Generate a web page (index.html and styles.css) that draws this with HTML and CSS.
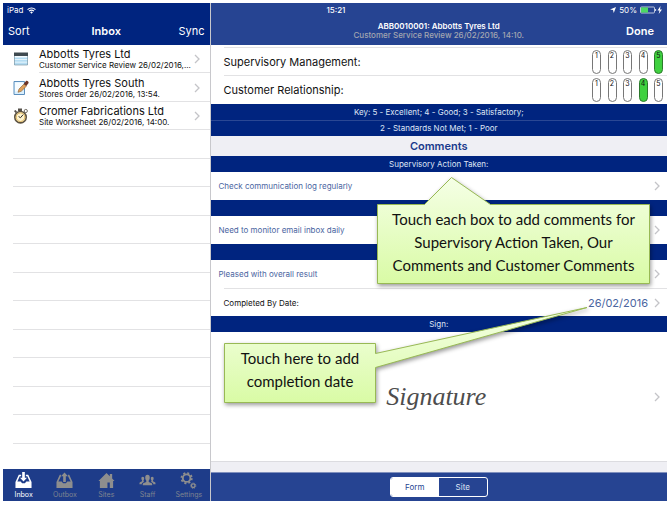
FILE: index.html
```html
<!DOCTYPE html>
<html lang="en">
<head>
  <meta charset="UTF-8" />
  <meta name="viewport" content="width=device-width, initial-scale=1.0"/>
  <title>Inbox - Customer Service Review</title>
  <link rel="stylesheet" href="styles.css">
</head>
<body>
  <div class="tablet">

    <aside class="sidebar">
      <header class="side-header">
        <div class="status">
          <span>iPad</span>
          <svg class="wifi" viewBox="0 0 16 12"><path d="M1 4.5a10 10 0 0 1 14 0M3.6 7.2a6.2 6.2 0 0 1 8.8 0" fill="none" stroke="#fff" stroke-width="2"/><path d="M5.6 9a3.5 3.5 0 0 1 4.8 0L8 11.6z" fill="#fff"/></svg>
        </div>
        <div class="nav">
          <button class="nav-btn">Sort</button>
          <h1>Inbox</h1>
          <button class="nav-btn">Sync</button>
        </div>
      </header>

      <ul class="list">
        <li class="item">
          <svg class="item-icon" viewBox="0 0 16 16"><path d="M1 2h14v12H1z" fill="#b4dcf2"/><path d="M1 5h14v1.500H1zM1 8.200h14v.8H1zM1 10.800h14v.8H1z" fill="#f4fbff"/><path d="M1 1.500h14V5H1z" fill="#3f4a50"/><path d="M1.500 5v9h13V5" fill="none" stroke="#7f9aa8" stroke-width=".7"/></svg>
          <a class="item-link" href="#">
            <span class="item-text"><strong>Abbotts Tyres Ltd</strong><small>Customer Service Review 26/02/2016,...</small></span>
            <svg class="chevron" viewBox="0 0 6 10"><path d="M1 1l4 4-4 4"/></svg>
          </a>
        </li>
        <li class="item">
          <svg class="item-icon" viewBox="0 0 16 16"><path d="M1 1.500h10.500v13H1z" fill="#d9effd" stroke="#5d8fbd"/><path d="M2 2.500h8v4l-5 5H2z" fill="#f7fcff"/><path d="M5 12.300l1-3.300 5-5 2.400 2.200-5.200 5.100z" fill="#e0a15c" stroke="#8a5a28" stroke-width=".6"/><path d="M10.800 3.800L13 1c1-.7 3 .6 2.600 2l-2.300 3z" fill="#6e3426"/></svg>
          <a class="item-link" href="#">
            <span class="item-text"><strong>Abbotts Tyres South</strong><small>Stores Order 26/02/2016, 13:54.</small></span>
            <svg class="chevron" viewBox="0 0 6 10"><path d="M1 1l4 4-4 4"/></svg>
          </a>
        </li>
        <li class="item">
          <svg class="item-icon" viewBox="0 0 16 16"><path d="M5 .5h4v2.500H5zM1 3l1.500-1 1.500 1.500L2.500 5z" fill="#55514a"/><circle cx="12.800" cy="3" r="1.600" fill="none" stroke="#77736b"/><circle cx="7.500" cy="9.200" r="5.700" fill="#fff4cf" stroke="#5c5240" stroke-width="1.600"/><circle cx="7.500" cy="9.200" r="4.300" fill="none" stroke="#dfb65e"/><path d="M7.500 9.700l2.600-3M7.500 9.700L5.600 8.500" stroke="#33302c"/></svg>
          <a class="item-link" href="#">
            <span class="item-text"><strong>Cromer Fabrications Ltd</strong><small>Site Worksheet 26/02/2016, 14:00.</small></span>
            <svg class="chevron" viewBox="0 0 6 10"><path d="M1 1l4 4-4 4"/></svg>
          </a>
        </li>
        <li class="blank"></li>
        <li class="blank"></li>
        <li class="blank"></li>
        <li class="blank"></li>
        <li class="blank"></li>
        <li class="blank"></li>
        <li class="blank"></li>
        <li class="blank"></li>
        <li class="blank"></li>
        <li class="blank"></li>
        <li class="blank"></li>
        <li class="blank last"></li>
      </ul>

      <nav class="tabs">
        <button class="tab active">
          <svg viewBox="0 0 18 18"><path d="M4 3h2.500v1.500H5L2.500 10H6l1.500 2h3L12 10h3.500L13 4.500h-1.500V3H14l3.500 7.500V17H.5v-6.500z"/><path d="M7.600 0h2.800v6h2.300L9 10 5.300 6h2.300z"/></svg>
          Inbox
        </button>
        <button class="tab">
          <svg viewBox="0 0 18 18"><path d="M4 3h1.200v1.500L2.500 10H6l1.500 2h3L12 10h3.500l-2.700-5.500V3H14l3.500 7.500V17H.5v-6.500z"/><path d="M7.600 10.500V4.500H5.300L9 .5l3.700 4h-2.300v6z"/></svg>
          Outbox
        </button>
        <button class="tab">
          <svg viewBox="0 0 18 18"><path d="M9 1l3.500 3.400V2H15v4.900L17.500 9.500H16V17h-3.500v-6H10v6H2V9.500H.5z"/></svg>
          Sites
        </button>
        <button class="tab">
          <svg viewBox="0 0 18 18"><path d="M9 3c1.600 0 2.500 1.200 2.400 3-.1 1.500-.5 2.400-1.100 3v1.500l3.200 1.500c.5.300.5 1 .5 2H4c0-1 0-1.700.5-2l3.200-1.500V9c-.6-.6-1-1.500-1.100-3C6.500 4.200 7.400 3 9 3z"/><path d="M4 5c1.100 0 1.600.8 1.500 2 0 .9-.3 1.500-.7 1.900v1l.6.500-2.400 1.400V13H.5c0-1.300 0-1.800.6-2.100l2.100-1v-1C2.800 8.500 2.500 7.900 2.500 7 2.400 5.800 2.900 5 4 5zM14 5c-1.100 0-1.600.8-1.500 2 0 .9.3 1.500.7 1.900v1l-.6.500 2.400 1.400V13h2.500c0-1.300 0-1.800-.6-2.100l-2.100-1v-1c.4-.4.7-1 .7-1.900.1-1.200-.4-2-1.500-2z"/></svg>
          Staff
        </button>
        <button class="tab">
          <svg class="gears" viewBox="0 0 18 18"><circle cx="7" cy="6.500" r="4" stroke-width="2"/><circle cx="7" cy="6.500" r="5.500" stroke-width="1.800" stroke-dasharray="2.160 2.160"/><circle cx="14" cy="14.500" r="1.900" stroke-width="1.400"/><circle cx="14" cy="14.500" r="2.800" stroke-width="1" stroke-dasharray="1.100 1.100"/></svg>
          Settings
        </button>
      </nav>
    </aside>

    <main class="detail">
      <header class="detail-header">
        <div class="status detail-status">
          <span class="clock">15:21</span>
          <span class="power">
            <svg class="location" viewBox="0 0 8 8"><path d="M8 0L5 8 4 4 0 3.300z" fill="#fff"/></svg>
            50%
            <svg class="battery" viewBox="0 0 23 8"><rect x=".5" y="1" width="14" height="6" rx="1" fill="none" stroke="#dfe4f0" stroke-width=".8"/><rect x="1" y="1.400" width="7" height="5.200" fill="#4cd964"/><path d="M15.600 3v2" stroke="#dfe4f0"/><path d="M20.500 0L17.500 4.400h2L18.700 8l3.300-4.600h-2z" fill="#fff"/></svg>
          </span>
        </div>
        <div class="detail-nav">
          <div class="detail-title">
            <strong>ABB0010001: Abbotts Tyres Ltd</strong>
            <span>Customer Service Review 26/02/2016, 14:10.</span>
          </div>
          <button class="nav-btn done">Done</button>
        </div>
      </header>

      <form class="form">
        <div class="rating" role="radiogroup" aria-labelledby="supervisory-label">
          <span class="rating-label" id="supervisory-label">Supervisory Management:</span>
          <div class="scores">
            <label class="score"><input type="radio" name="supervisory" value="1"><span>1</span></label>
            <label class="score"><input type="radio" name="supervisory" value="2"><span>2</span></label>
            <label class="score"><input type="radio" name="supervisory" value="3"><span>3</span></label>
            <label class="score"><input type="radio" name="supervisory" value="4"><span>4</span></label>
            <label class="score"><input type="radio" name="supervisory" value="5" checked><span>5</span></label>
          </div>
        </div>
        <div class="rating" role="radiogroup" aria-labelledby="relationship-label">
          <span class="rating-label" id="relationship-label">Customer Relationship:</span>
          <div class="scores">
            <label class="score"><input type="radio" name="relationship" value="1"><span>1</span></label>
            <label class="score"><input type="radio" name="relationship" value="2"><span>2</span></label>
            <label class="score"><input type="radio" name="relationship" value="3"><span>3</span></label>
            <label class="score"><input type="radio" name="relationship" value="4" checked><span>4</span></label>
            <label class="score"><input type="radio" name="relationship" value="5"><span>5</span></label>
          </div>
        </div>

        <p class="band">Key: 5 - Excellent; 4 - Good; 3 - Satisfactory;</p>
        <p class="band lined">2 - Standards Not Met; 1 - Poor</p>
        <h2>Comments</h2>

        <p class="band">Supervisory Action Taken:</p>
        <button type="button" class="row comment">Check communication log regularly <svg class="chevron" viewBox="0 0 6 10"><path d="M1 1l4 4-4 4"/></svg></button>
        <p class="band"></p>
        <button type="button" class="row comment">Need to monitor email inbox daily <svg class="chevron" viewBox="0 0 6 10"><path d="M1 1l4 4-4 4"/></svg></button>
        <p class="band"></p>
        <button type="button" class="row comment">Pleased with overall result <svg class="chevron" viewBox="0 0 6 10"><path d="M1 1l4 4-4 4"/></svg></button>
        <button type="button" class="row date-row">Completed By Date: <span class="date">26/02/2016</span> <svg class="chevron" viewBox="0 0 6 10"><path d="M1 1l4 4-4 4"/></svg></button>
        <p class="band">Sign:</p>
        <button type="button" class="sign"><span class="signature">Signature</span> <svg class="chevron" viewBox="0 0 6 10"><path d="M1 1l4 4-4 4"/></svg></button>
      </form>

      <footer class="toolbar">
        <div class="segmented">
          <button class="segment selected">Form</button>
          <button class="segment">Site</button>
        </div>
      </footer>

      <!-- help callouts -->
      <div class="callout callout-comments">
        <svg viewBox="0 0 273 107">
          <defs><linearGradient id="lime" x1="0" y1="0" x2="0" y2="1"><stop offset="0" stop-color="#f5ffe6"/><stop offset="1" stop-color="#d9fba5"/></linearGradient></defs>
          <path d="M.5 27.500h47L74.500.5l39 27h159v79H.5z" fill="url(#lime)" stroke="#98b954"/>
        </svg>
        <p>Touch each box to add comments for Supervisory Action Taken, Our Comments and Customer Comments</p>
      </div>
      <div class="callout callout-date">
        <svg viewBox="0 0 363 96">
          <path d="M.5 36.500h151v10L363 .5l-211.500 60v35H.5z" fill="url(#lime)" stroke="#98b954"/>
        </svg>
        <p>Touch here to add completion date</p>
      </div>
    </main>

  </div>
</body>
</html>
```
FILE: styles.css
```css
* {
  box-sizing: border-box;
}
body {
  font-family: Inter, 'Liberation Sans', sans-serif;
  background-color: #fff;
  color: #111;
  margin: 0;
  padding: 3px 4px 4px 3px;
  min-height: 100vh;
  display: flex;
}
button {
  font-family: inherit;
  background: none;
  border: none;
  padding: 0;
  cursor: pointer;
}
h1, h2, p, ul {
  margin: 0;
  padding: 0;
}
.tablet {
  flex: 1;
  display: grid;
  grid-template-columns: 5fr 11fr;
}

/* sidebar */
.sidebar {
  display: flex;
  flex-direction: column;
  border-right: 1px solid #c8c8cc;
}
.side-header,
.detail-header {
  height: 42px;
  color: #fff;
}
.side-header {
  background-color: #00247f;
}
.status {
  height: 14px;
  padding: 0 4px;
  display: flex;
  align-items: center;
  gap: 4px;
  font-size: 8px;
}
.wifi {
  width: 9px;
  height: 7px;
}
.nav {
  height: 28px;
  padding: 0 5px;
  display: grid;
  grid-template-columns: 1fr auto 1fr;
  align-items: center;
}
.nav h1 {
  font-size: 11px;
  font-weight: 600;
}
.nav-btn {
  color: #fff;
  font-size: 11px;
  text-align: left;
}
.nav-btn:last-child {
  text-align: right;
}
.list {
  flex: 1;
  display: flex;
  flex-direction: column;
  list-style: none;
}
.item {
  flex: 28;
  display: flex;
  align-items: center;
}
.item-icon {
  width: 16px;
  height: 16px;
  margin: 0 10px;
}
.item-link {
  flex: 1;
  align-self: stretch;
  display: flex;
  align-items: center;
  justify-content: space-between;
  padding-right: 10px;
  box-shadow: inset 0 -1px #e2e2e4;
  color: #111;
  text-decoration: none;
}
.item-text {
  display: flex;
  flex-direction: column;
  white-space: nowrap;
}
.item-text strong {
  font-size: 11px;
  line-height: 13px;
  font-weight: 400;
}
.item-text small {
  font-size: 8px;
  line-height: 9px;
}
.blank {
  flex: 28;
  margin-left: 10px;
  box-shadow: inset 0 -1px #e2e2e4;
}
.blank.last {
  flex: 25;
  box-shadow: none;
}
.chevron {
  width: 6px;
  height: 10px;
  flex: none;
  fill: none;
  stroke: #c4c4c8;
  stroke-width: 1.3;
}
.tabs {
  height: 32px;
  display: grid;
  grid-template-columns: repeat(5, 1fr);
  background-color: #1e3c89;
}
.tab {
  display: flex;
  flex-direction: column;
  align-items: center;
  justify-content: center;
  gap: 1px;
  color: #7f8490;
  font-size: 7px;
  line-height: 9px;
}
.tab svg {
  width: 17px;
  height: 17px;
  fill: #8e8e8e;
}
.tab .gears {
  fill: none;
  stroke: #8e8e8e;
}
.tab.active {
  color: #fff;
}
.tab.active svg {
  fill: #fff;
}

/* detail */
.detail {
  position: relative;
  display: flex;
  flex-direction: column;
  background-color: #efeff4;
}
.detail-header {
  background-color: #264492;
}
.clock {
  flex: 1;
  padding-left: 112px;
  font-weight: 500;
}
.power {
  display: flex;
  align-items: center;
  gap: 3px;
}
.location {
  width: 6px;
  height: 6px;
}
.battery {
  width: 23px;
  height: 8px;
}
.detail-nav {
  height: 28px;
  padding: 0 13px;
  display: grid;
  grid-template-columns: 1fr auto 1fr;
  align-items: center;
}
.detail-title {
  grid-column: 2;
  display: flex;
  flex-direction: column;
  font-size: 8px;
  line-height: 9px;
  font-weight: 500;
  text-align: center;
}
.detail-title strong {
  font-weight: 600;
}
.detail-title span {
  color: #a3a6b0;
}
.done {
  font-weight: 600;
}
.form {
  flex: 1;
  display: flex;
  flex-direction: column;
  margin-bottom: 10px;
  padding-top: 3px;
  background-color: #fff;
  border-bottom: 1px solid #dcdce0;
}
.rating {
  height: 28px;
  margin-left: 13px;
  padding-right: 4px;
  display: flex;
  align-items: center;
  justify-content: space-between;
  box-shadow: 0 -1px #e2e2e4;
}
.rating-label {
  font-size: 11px;
}
.scores {
  width: 71px;
  display: flex;
  justify-content: space-between;
}
.score {
  display: grid;
  width: 9px;
  height: 24px;
}
.score input,
.score span {
  grid-area: 1 / 1;
}
.score input {
  appearance: none;
  margin: 0;
  border: 1px solid #777;
  border-radius: 5px;
}
.score input:checked {
  background-color: #3fd13f;
  border-color: #2c7a2c;
}
.score span {
  z-index: 1;
  font-size: 7px;
  line-height: 11px;
  text-align: center;
}
.band {
  height: 16px;
  background-color: #00247f;
  color: #dfe5f5;
  font-size: 8px;
  line-height: 16px;
  text-align: center;
}
.band.lined {
  box-shadow: inset 0 1px #2a4794;
}
h2 {
  height: 20px;
  background-color: #efeff4;
  color: #1a3a8c;
  font-size: 11px;
  font-weight: 600;
  line-height: 20px;
  text-align: center;
}
.row {
  height: 28px;
  padding: 0 7px 0 8px;
  display: flex;
  align-items: center;
  justify-content: space-between;
  font-size: 8px;
  text-align: left;
}
.comment {
  color: #4a659f;
}
.date-row {
  margin-left: 13px;
  padding-left: 0;
  gap: 6px;
  border-top: 1px solid #e2e2e4;
  color: #111;
}
.date {
  margin-left: auto;
  color: #4a659f;
  font-size: 11px;
}
.sign {
  flex: 1;
  min-height: 80px;
  padding: 0 7px 0 8px;
  display: flex;
  align-items: center;
}
.signature {
  flex: 1;
  color: #4d4d4d;
  font-family: 'Liberation Serif', serif;
  font-size: 26px;
  font-style: italic;
  text-align: center;
}
.toolbar {
  height: 29px;
  display: flex;
  align-items: center;
  justify-content: center;
  background-color: #264492;
  border-top: 1px solid #8090bd;
}
.segmented {
  width: 98px;
  height: 20px;
  display: flex;
  border: 1px solid #fff;
  border-radius: 3px;
  overflow: hidden;
}
.segment {
  flex: 1;
  color: #dfe5f5;
  font-size: 8px;
}
.segment.selected {
  background-color: #fff;
  color: #264492;
}

/* callouts */
.callout {
  position: absolute;
  color: #111;
  font-family: Lato, sans-serif;
  font-size: 15px;
  line-height: 23px;
  text-align: center;
}
.callout svg {
  position: absolute;
  top: 0;
  left: 0;
  width: 100%;
  height: 100%;
  overflow: visible;
  filter: drop-shadow(1px 2px 2px rgba(0, 0, 0, 0.4));
}
.callout p {
  position: relative;
}
.callout-comments {
  top: 174px;
  right: 17px;
  width: 273px;
  height: 107px;
  padding: 31px 10px 0;
}
.callout-date {
  top: 304px;
  right: 80px;
  width: 363px;
  height: 96px;
}
.callout-date p {
  width: 152px;
  padding: 40px 12px 0;
}
```
